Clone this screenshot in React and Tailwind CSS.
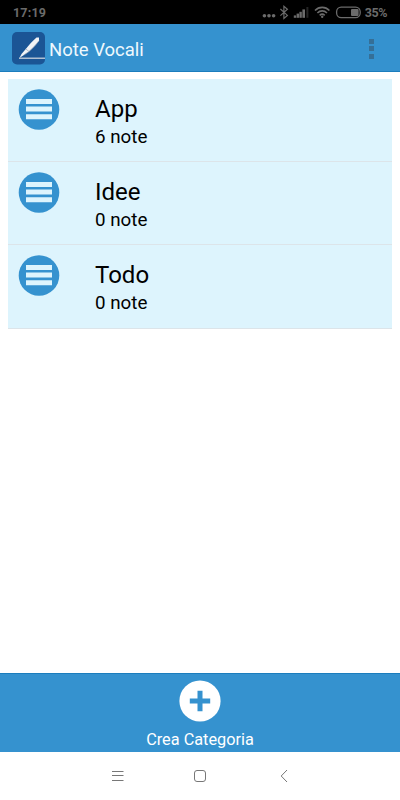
import React from 'react';

const categories = [
    { name: 'App', count: 6, height: 'h-[83px]' },
    { name: 'Idee', count: 0, height: 'h-[83px]' },
    { name: 'Todo', count: 0, height: 'h-[84px]' },
];

const StatusBar = () => (
    <div className="h-6 bg-black text-[#6b6b6b] flex items-center justify-between pl-[13px] pr-[13px] text-[12.5px] leading-6 font-bold">
        <span className="tracking-[0.2px] pt-[2px]">17:19</span>
        <div className="flex items-center">
            <svg className="w-[99px] h-6" viewBox="262 0 99 24" fill="none" stroke="currentColor">
                <g fill="currentColor" stroke="none">
                    <circle cx="264.4" cy="15.8" r="1.8" />
                    <circle cx="269" cy="15.8" r="1.8" />
                    <circle cx="273.6" cy="15.8" r="1.8" />
                    <rect x="293.8" y="15.4" width="2.4" height="2.4" />
                    <rect x="296.6" y="13.6" width="2.4" height="4.2" />
                    <rect x="299.4" y="11.8" width="2.4" height="6" />
                    <rect x="302.4" y="9.4" width="2.6" height="8.4" />
                    <rect x="306.4" y="7" width="2" height="10.8" opacity="0.35" />
                    <rect x="351" y="9" width="7.6" height="7" rx="1" />
                </g>
                <path d="M280.4 9l7 6.4-3.500 3V6.200l3.500 3-7 6.400" strokeWidth="1.2" />
                <path d="M315 10.500c4-4.200 10.400-4.200 14.400 0M317.400 13c2.800-2.800 6.800-2.800 9.600 0M319.700 15.300c1.500-1.400 3.500-1.400 5 0" strokeWidth="1.6" />
                <circle cx="322.200" cy="16.800" r="1.200" fill="currentColor" stroke="none" />
                <rect x="336.600" y="7.100" width="23.600" height="10.600" rx="4.600" strokeWidth="1.3" />
            </svg>
            <span className="ml-[4px] pt-[2px] text-[12.5px] tracking-[-0.45px]">35%</span>
        </div>
    </div>
);

const AppIcon = () => (
    <svg className="w-[33px] h-[33px] mt-[2px]" viewBox="0 0 33 33">
        <rect width="33" height="32.4" rx="5" fill="#1b5595" />
        <path d="M7.500 26l2-4 4.300-5C17 13 20.500 9 24.500 5.500H27v3.200c-3 4-6.300 7.500-10 10.800L11.500 23.300z" fill="#f1f3f6" />
        <path d="M11.500 23.300l5.500-3.800c3.700-3.300 7-6.800 10-10.800M13.800 17l3.200 2.500" fill="none" stroke="#9aa6b8" strokeWidth="0.7" />
        <path d="M7 26.200h26" stroke="#d5dae0" strokeWidth="1.2" />
    </svg>
);

const Header = () => (
    <div className="h-12 bg-[#3592cf] border-b border-[#1b7dbd] flex items-center pl-3 pr-[26px]">
        <AppIcon />
        <h1 className="ml-1 flex-1 text-[#eef8fd] text-[18.5px] leading-6 pt-[4px]">Note Vocali</h1>
        <div className="flex flex-col gap-[2.5px] pt-[2px]">
            <span className="w-[5px] h-[5px] bg-[#356f97]" />
            <span className="w-[5px] h-[5px] bg-[#356f97]" />
            <span className="w-[5px] h-[5px] bg-[#356f97]" />
        </div>
    </div>
);

const CategoryRow = ({ name, count, height }) => (
    <li className={`${height} flex items-start border-b border-[#dce4e9] pl-[10px] pt-[10px]`}>
        <svg className="w-[42px] h-[42px]" viewBox="0 0 42 42">
            <circle cx="21" cy="20.5" r="20.3" fill="#3592cf" />
            <path d="M8 10h26v5H8zM8 17.500h26v5H8zM8 25.200h26v5H8z" fill="#ddf4fd" />
        </svg>
        <div className="ml-[35px] pt-[5px] text-black">
            <div className="text-[24px] leading-[30px]">{name}</div>
            <div className="text-[18.8px] leading-[27px]">{count} note</div>
        </div>
    </li>
);

const Footer = () => (
    <button className="h-[79px] w-full bg-[#3592cf] border-t border-[#1b7dbd] flex flex-col items-center pt-[6px]">
        <svg className="w-[42px] h-[42px]" viewBox="0 0 42 42">
            <circle cx="21" cy="21" r="20.6" fill="#fff" />
            <path d="M18.500 10.800h5v7.700h7.700v5h-7.700v7.700h-5v-7.700h-7.700v-5h7.700z" fill="#3592cf" />
        </svg>
        <span className="mt-[8px] text-white text-[16.3px] leading-5">Crea Categoria</span>
    </button>
);

const NavBar = () => (
    <div className="h-12 bg-white">
        <svg className="w-full h-12" viewBox="0 752 400 48" fill="none" stroke="#777" strokeWidth="1">
            <path d="M112 771.500h11.500M112 775.500h11.500M112 780.500h11.500" />
            <rect x="194.5" y="770.5" width="11" height="11" rx="2.5" />
            <path d="M287 770l-5.800 6 5.800 6" />
        </svg>
    </div>
);

const App = () => (
    <div className="h-screen bg-white flex flex-col overflow-hidden font-['Roboto',sans-serif]">
        <StatusBar />
        <Header />
        <main className="flex-1 px-2 pt-[7px]">
            <ul className="bg-[#ddf4fd]">
                {categories.map((category) => (
                    <CategoryRow key={category.name} {...category} />
                ))}
            </ul>
        </main>
        <Footer />
        <NavBar />
    </div>
);

export default App;
